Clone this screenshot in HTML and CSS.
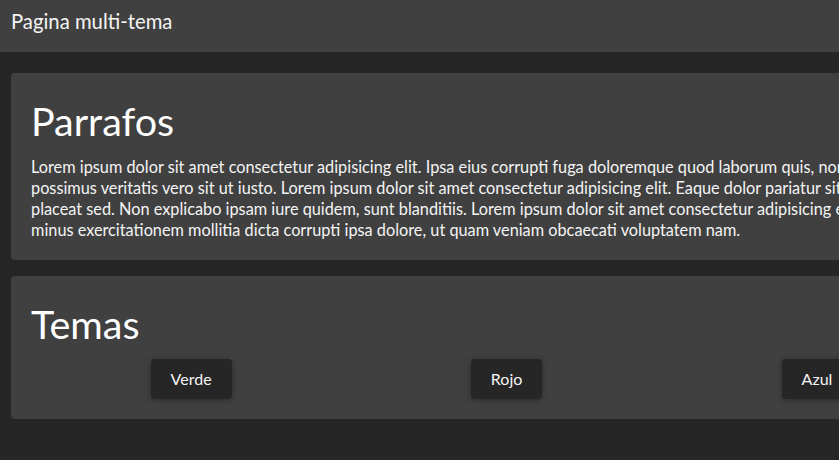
FILE: index.html
```html
<!DOCTYPE html>
<html lang="es">
<head>
<meta charset="utf-8">
<title>Pagina multi-tema</title>
<link rel="stylesheet" href="styles.css">
</head>
<body>
<div class="page">
  <header class="topbar">
    <span class="brand">Pagina multi-tema</span>
  </header>
  <main class="content">
    <section class="card">
      <h1 class="card-title">Parrafos</h1>
      <p class="card-text">Lorem ipsum dolor sit amet consectetur adipisicing elit. Ipsa eius corrupti fuga doloremque quod laborum quis, non dolorum quam possimus veritatis vero sit ut iusto. Lorem ipsum dolor sit amet consectetur adipisicing elit. Eaque dolor pariatur sit voluptates cum placeat sed. Non explicabo ipsam iure quidem, sunt blanditiis. Lorem ipsum dolor sit amet consectetur adipisicing elit. Voluptatibus minus exercitationem mollitia dicta corrupti ipsa dolore, ut quam veniam obcaecati voluptatem nam.</p>
    </section>
    <section class="card">
      <h1 class="card-title">Temas</h1>
      <div class="themes">
        <button class="theme-btn" type="button">Verde</button>
        <button class="theme-btn" type="button">Rojo</button>
        <button class="theme-btn" type="button">Azul</button>
      </div>
    </section>
  </main>
</div>
</body>
</html>
```
FILE: styles.css
```css
html, body {
  margin: 0;
  padding: 0;
  background: #262626;
  overflow: hidden;
}

body {
  font-family: Lato, "Open Sans", sans-serif;
  color: #ffffff;
}

.page {
  width: 1003px;
}

.topbar {
  height: 52px;
  box-sizing: border-box;
  padding: 9px 11px 0;
  background: #404040;
}

.brand {
  font-size: 20.3px;
  line-height: 24px;
  color: #f4f4f4;
}

.content {
  display: flex;
  flex-direction: column;
  gap: 16px;
  padding: 21px 11px;
}

.card {
  background: #404040;
  border-radius: 4px;
  padding: 20px;
}

.card-title {
  margin: 3px 0 10px;
  font-size: 39.5px;
  line-height: 50px;
  font-weight: 400;
  color: #ffffff;
}

.card-text {
  margin: 0;
  font-size: 16.3px;
  line-height: 21px;
  color: #f4f4f4;
}

.themes {
  display: flex;
  justify-content: space-around;
}

.theme-btn {
  font-family: inherit;
  font-size: 16px;
  line-height: 20px;
  padding: 10px 20px;
  border: none;
  border-radius: 4px;
  background: #262626;
  color: #f4f4f4;
  box-shadow: 0 1px 6px rgba(0, 0, 0, 0.35);
}
```
